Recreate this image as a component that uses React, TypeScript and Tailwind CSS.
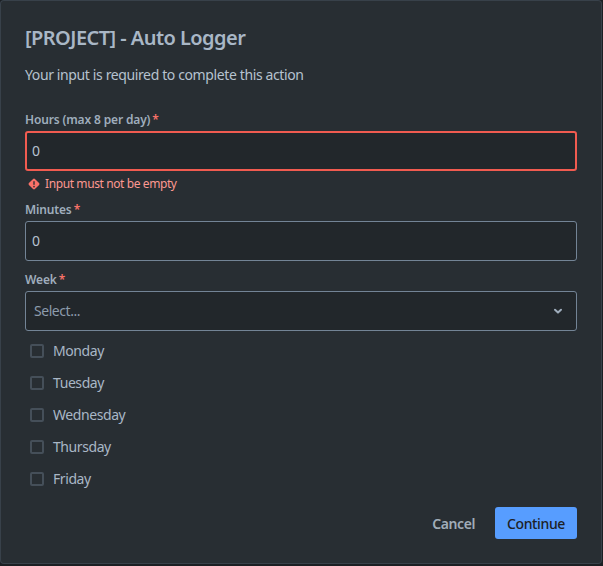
import React from "react";

function Label({ text }: { text: string }) {
  return (
    <div className="flex h-4 items-center pt-px text-[12px] leading-4 font-semibold tracking-[-0.15px] text-[#9fadbc]">
      <span>{text}</span>
      <span className="ml-[2px] text-[#f87168]">*</span>
    </div>
  );
}

function Day({ text }: { text: string }) {
  return (
    <div className="flex h-8 items-center pl-[5px]">
      <span className="h-[14px] w-[14px] rounded-[2px] border-2 border-[#454f59]" />
      <span className="ml-[9px] text-[14px] leading-5 tracking-[-0.42px] text-[#a9b7c6]">{text}</span>
    </div>
  );
}

export default function App() {
  return (
    <div className="h-[566px] w-[603px] bg-[#1b1f23] pt-px pr-[2px] pb-[3px] pl-px font-['Noto_Sans',sans-serif]">
      <div className="flex h-full flex-col rounded-[3px] bg-[#282e33] px-6 pt-[22px] shadow-[0_0_0_1px_#38414a]">
        <h1 className="h-[30px] text-[20px] leading-[30px] font-semibold tracking-[-0.55px] text-[#a9b7c6]">[PROJECT] - Auto Logger</h1>
        <p className="mt-[12px] text-[14px] leading-5 tracking-[-0.38px] text-[#b6c2cf]">Your input is required to complete this action</p>
        <div className="mt-[26px]"><Label text="Hours (max 8 per day)" /></div>
        <div className="mt-[4px] flex h-10 items-center rounded-[3px] border-2 border-[#f15b50] bg-[#22272b] px-[5px] pb-[2px] text-[14px] text-[#b6c2cf]">0</div>
        <div className="mt-[5px] flex h-4 items-center text-[12px] leading-4 tracking-[-0.4px] text-[#fd9891]">
          <svg width="16" height="16" viewBox="0 0 24 24" className="ml-[1px]">
            <path fill="#f87168" d="M13.4 4.4a2 2 0 0 0-2.8 0l-6.2 6.2a2 2 0 0 0 0 2.8l6.2 6.2a2 2 0 0 0 2.8 0l6.2-6.2a2 2 0 0 0 0-2.8z" />
            <rect x="11" y="7.5" width="2" height="6" rx="1" fill="#282e33" />
            <circle cx="12" cy="16" r="1.2" fill="#282e33" />
          </svg>
          <span className="ml-[3px]">Input must not be empty</span>
        </div>
        <div className="mt-[9px]"><Label text="Minutes" /></div>
        <div className="mt-[4px] flex h-10 items-center rounded-[3px] border border-[#738496] bg-[#22272b] px-[6px] pb-[2px] text-[14px] text-[#b6c2cf]">0</div>
        <div className="mt-[10px]"><Label text="Week" /></div>
        <div className="mt-[4px] flex h-10 items-center justify-between rounded-[3px] border border-[#738496] bg-[#22272b] pr-[10px] pl-2 text-[14px] tracking-[-0.45px] text-[#8c9bab]">
          <span className="pb-[2px]">Select...</span>
          <svg width="16" height="16" viewBox="0 0 16 16">
            <path d="M5 6.8 8 9.6l3-2.8" fill="none" stroke="#9fadbc" strokeWidth="2" strokeLinecap="round" strokeLinejoin="round" />
          </svg>
        </div>
        <div className="mt-1 flex flex-col">
          <Day text="Monday" />
          <Day text="Tuesday" />
          <Day text="Wednesday" />
          <Day text="Thursday" />
          <Day text="Friday" />
        </div>
        <div className="mt-3 flex items-center justify-end">
          <span className="mr-5 text-[14px] font-semibold tracking-[-0.4px] text-[#a1adb9]">Cancel</span>
          <span className="flex h-8 w-[82px] items-center justify-center rounded-[3px] bg-[#579dff] text-[14px] font-medium tracking-[-0.36px] text-[#1d2125]">Continue</span>
        </div>
      </div>
    </div>
  );
}
